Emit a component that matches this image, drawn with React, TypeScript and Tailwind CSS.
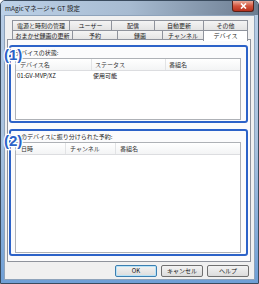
const font = "font-['Noto_Sans_CJK_JP','Noto_Sans',sans-serif]";

type TabDef = { label: string; w: string; selected?: boolean };

const row1: TabDef[] = [
  { label: '電源と時刻の管理', w: 'w-[57px]' },
  { label: 'ユーザー', w: 'w-[42px]' },
  { label: '配信', w: 'w-[43px]' },
  { label: '自動更新', w: 'w-[49px]' },
  { label: 'その他', w: 'w-[45px]' },
];

const row2: TabDef[] = [
  { label: 'おまかせ録画の更新', w: 'w-[60px]' },
  { label: '予約', w: 'w-[45px]' },
  { label: '録画', w: 'w-[45px]' },
  { label: 'チャンネル', w: 'w-[41px]' },
  { label: 'デバイス', w: 'w-[45px]', selected: true },
];

function TabRow({ tabs }: { tabs: TabDef[] }) {
  return (
    <div className="flex h-[10px]">
      {tabs.map((t, i) => (
        <div
          key={t.label}
          className={`${t.w} flex items-center justify-center border-t border-l border-[#8f939c] text-[6px] leading-none text-[#222] ${
            i === tabs.length - 1 ? 'border-r' : ''
          } ${
            t.selected
              ? 'relative z-10 h-[11px] bg-white'
              : 'bg-gradient-to-b from-[#f4f4f4] to-[#e3e3e3]'
          }`}
        >
          {t.label}
        </div>
      ))}
    </div>
  );
}

type Col = { label: string; w: string; pl: string };

function ListView({ cols, rows, h }: { cols: Col[]; rows: string[][]; h: string }) {
  return (
    <div className={`${h} flex flex-col border border-[#aeb1b6] bg-white`}>
      <div className="flex h-[12px] shrink-0 border-b border-[#dcdde0] bg-gradient-to-b from-white to-[#f3f4f5]">
        {cols.map((c, i) => (
          <div
            key={c.label}
            className={`${c.w} ${c.pl} flex items-center text-[6px] leading-none text-[#333] ${
              i < cols.length - 1 ? 'border-r border-[#e2e3e5]' : ''
            }`}
          >
            {c.label}
          </div>
        ))}
      </div>
      {rows.map((r, ri) => (
        <div key={ri} className="flex h-[10px] items-center text-[6px] leading-none text-[#111]">
          {r.map((cell, ci) => (
            <div key={ci} className={`${cols[ci].w} ${ci === 0 ? 'pl-[1px]' : 'pl-[1px]'}`}>
              {cell}
            </div>
          ))}
        </div>
      ))}
    </div>
  );
}

function Marker({ n, top }: { n: string; top: string }) {
  return (
    <span
      className={`absolute left-[-7px] ${top} font-['Liberation_Sans',sans-serif] text-[15px] font-bold leading-none text-[#2c62c8] [paint-order:stroke_fill] [-webkit-text-stroke:2.5px_white]`}
    >
      ({n})
    </span>
  );
}

function Button({ label, primary }: { label: string; primary?: boolean }) {
  return (
    <button
      className={`flex h-[12px] w-[42px] items-center justify-center rounded-[2px] border text-[6px] leading-none text-[#111] bg-gradient-to-b from-[#f3f3f3] to-[#dcdcdc] ${
        primary ? 'border-[#3c7fb1] shadow-[inset_0_0_0_1px_#b8e3f8]' : 'border-[#707070]'
      }`}
    >
      {label}
    </button>
  );
}

export default function App() {
  return (
    <div
      className={`${font} flex h-[284px] w-[259px] flex-col overflow-hidden rounded-t-[5px] border border-[#3a4b5e] bg-gradient-to-b from-[#b7cde6] via-[#a9c2de] to-[#6f9fd6]`}
    >
      <div className="flex h-[14px] shrink-0 items-center justify-between bg-gradient-to-r from-[#bcd1e8] via-[#a7bbd1] to-[#6c7d91] pl-[4px] pr-[4px]">
        <span className="text-[6.5px] leading-none text-[#1a1a1a]">mAgicマネージャ GT 設定</span>
        <div className="mb-[2px] flex h-[11px] w-[22px] items-center justify-center self-start rounded-b-[3px] border border-t-0 border-[#5a2018] bg-gradient-to-b from-[#e9a99a] via-[#d2533d] to-[#b7301c]">
          <svg width="7" height="6" viewBox="0 0 7 6">
            <path d="M1 0.5 L6 5.5 M6 0.5 L1 5.5" stroke="white" strokeWidth="1.6" />
          </svg>
        </div>
      </div>

      <div className="mx-[3px] mb-[3px] flex flex-1 flex-col border border-[#8ea3bb] bg-[#f0f0f0]">
        <div className="pl-[7px] pt-[4px]">
          <TabRow tabs={row1} />
          <TabRow tabs={row2} />
        </div>

        <div className="ml-[2px] mr-[3px] -mt-px flex h-[223px] flex-col gap-[6px] border border-[#8f939c] bg-[#fbfbfc] pb-[5px] pl-[1px] pr-[2px] pt-[5px]">
          <div className="relative flex h-[78px] flex-col rounded-[3px] border-2 border-[#2c62c8] pb-[1px] pl-[4px] pr-[5px] pt-[1px]">
            <div className="flex h-[10px] items-center text-[6px] leading-none text-[#222]">デバイスの状態:</div>
            <ListView
              h="flex-1"
              cols={[
                { label: 'デバイス名', w: 'w-[76px]', pl: 'pl-[4px]' },
                { label: 'ステータス', w: 'w-[74px]', pl: 'pl-[3px]' },
                { label: '番組名', w: 'flex-1', pl: 'pl-[3px]' },
              ]}
              rows={[['01:GV-MVP/XZ', '使用可能', '']]}
            />
            <Marker n="1" top="top-[0px]" />
          </div>

          <div className="relative flex flex-1 flex-col rounded-[3px] border-2 border-[#2c62c8] pb-[1px] pl-[4px] pr-[5px] pt-[1px]">
            <div className="flex h-[10px] items-center text-[6px] leading-none text-[#222]">このデバイスに振り分けられた予約:</div>
            <ListView
              h="flex-1"
              cols={[
                { label: '日時', w: 'w-[50px]', pl: 'pl-[5px]' },
                { label: 'チャンネル', w: 'w-[50px]', pl: 'pl-[4px]' },
                { label: '番組名', w: 'flex-1', pl: 'pl-[4px]' },
              ]}
              rows={[]}
            />
            <Marker n="2" top="top-[2px]" />
          </div>
        </div>

        <div className="flex justify-end gap-[4px] pr-[5px] pt-[3px]">
          <Button label="OK" primary />
          <Button label="キャンセル" />
          <Button label="ヘルプ" />
        </div>
      </div>
    </div>
  );
}
